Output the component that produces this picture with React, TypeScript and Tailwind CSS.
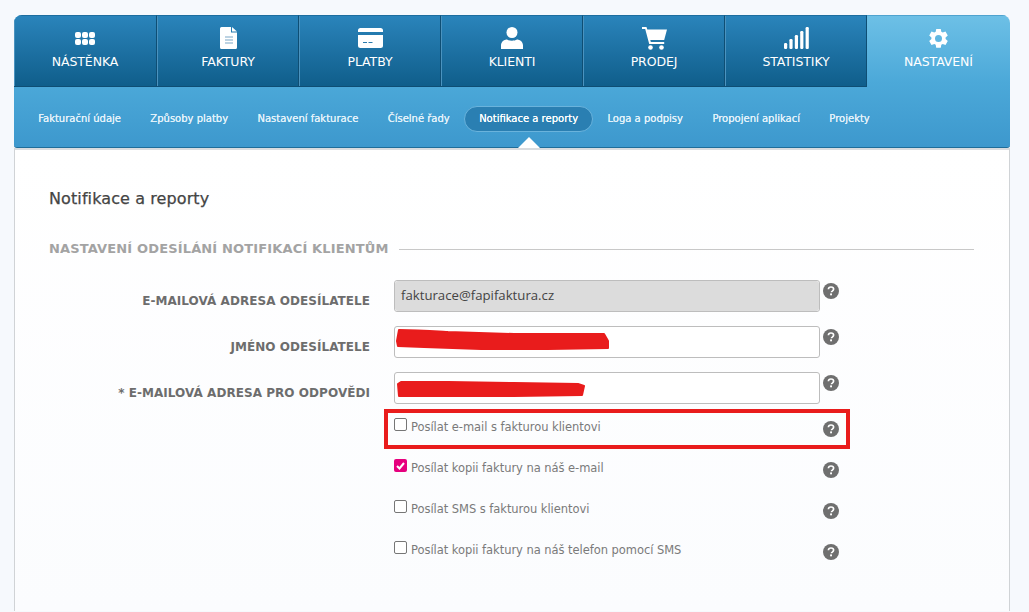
import React from "react";

function Help() {
  return (
    <svg width="16" height="16" viewBox="0 0 16 16" className="block shrink-0">
      <circle cx="8" cy="8" r="8" fill="#6f6f6f" />
      <path d="M5.4 6.2C5.5 4.7 6.6 4 8 4c1.5 0 2.6.8 2.6 2.1 0 1-.6 1.5-1.3 2-.6.4-.8.6-.8 1.2" fill="none" stroke="#fff" strokeWidth="1.7" />
      <rect x="7.1" y="10.4" width="1.9" height="1.9" fill="#fff" />
    </svg>
  );
}

const icons: Record<string, React.ReactNode> = {
  grid: (
    <svg width="20" height="13" viewBox="0 0 20 13" fill="#fff">
      {[0, 7, 14].map((x) => (
        <g key={x}>
          <rect x={x} y="0" width="6" height="6" rx="2" />
          <rect x={x} y="7" width="6" height="6" rx="2" />
        </g>
      ))}
    </svg>
  ),
  doc: (
    <svg width="17" height="22" viewBox="0 0 17 22">
      <path d="M1.5 0H11v5.5h6V20.5a1.5 1.5 0 0 1-1.5 1.5h-14A1.5 1.5 0 0 1 0 20.500V1.500A1.500 1.500 0 0 1 1.500 0Z" fill="#fff" />
      <path d="M12 0l5 4.500h-5Z" fill="#fff" />
      <path d="M5 10h8M5 13h8M5 16h8" stroke="#7aa7c7" strokeWidth="1" />
    </svg>
  ),
  card: (
    <svg width="25" height="20" viewBox="0 0 25 20" fill="#fff">
      <path d="M2.500 0h20A2.500 2.500 0 0 1 25 2.500V4H0V2.500A2.500 2.500 0 0 1 2.500 0Z" />
      <path d="M0 7h25v10.500a2.500 2.500 0 0 1-2.500 2.500h-20A2.500 2.500 0 0 1 0 17.500Z" />
      <rect x="5" y="14" width="4" height="1" fill="#2a7aac" />
      <rect x="10.500" y="14" width="4" height="1" fill="#2a7aac" />
    </svg>
  ),
  user: (
    <svg width="22" height="22" viewBox="0 0 22 22" fill="#fff">
      <circle cx="11" cy="5.500" r="5.500" />
      <path d="M0 22v-3.500C0 14.500 3.500 12.500 6 12.500c1.500.8 3 1.200 5 1.200s3.500-.4 5-1.200c2.500 0 6 2 6 6V22Z" />
    </svg>
  ),
  cart: (
    <svg width="25" height="23" viewBox="0 0 25 23" fill="#fff">
      <path d="M0 0h4.500l.8 2.500H25l-2.800 10.500H8.300l.5 2h13.400v2H7.200L3.200 2H0Z" />
      <circle cx="8.500" cy="20.500" r="2.300" />
      <circle cx="19.500" cy="20.500" r="2.300" />
    </svg>
  ),
  bars: (
    <svg width="25" height="22" viewBox="0 0 25 22" fill="#fff">
      <rect x="0" y="16" width="3.200" height="6" rx="1.200" />
      <rect x="5.400" y="12" width="3.200" height="10" rx="1.200" />
      <rect x="10.800" y="8" width="3.200" height="14" rx="1.200" />
      <rect x="16.200" y="4" width="3.200" height="18" rx="1.200" />
      <rect x="21.600" y="0" width="3.200" height="22" rx="1.200" />
    </svg>
  ),
  gear: (
    <svg width="21" height="21" viewBox="0 0 24 24" fill="#fff">
      <path fillRule="evenodd" d="M14.600 0l.6 3.300 1.600.9 3.200-1.100 2.600 4.500-2.500 2.200v1.900l2.500 2.200-2.600 4.500-3.200-1.100-1.600.9-.6 3.300H9.400l-.6-3.300-1.600-.9-3.200 1.100L1.400 13.900l2.500-2.200v-1.900L1.400 7.600 4 3.100l3.200 1.100 1.600-.9L9.400 0ZM12 7a4 4 0 1 0 0 8 4 4 0 0 0 0-8Z" transform="translate(0 1)" />
    </svg>
  ),
};

const tabs = [
  { label: "NÁSTĚNKA", icon: "grid" },
  { label: "FAKTURY", icon: "doc" },
  { label: "PLATBY", icon: "card" },
  { label: "KLIENTI", icon: "user" },
  { label: "PRODEJ", icon: "cart" },
  { label: "STATISTIKY", icon: "bars" },
];

const subs = [
  "Fakturační údaje",
  "Způsoby platby",
  "Nastavení fakturace",
  "Číselné řady",
  "Notifikace a reporty",
  "Loga a podpisy",
  "Propojení aplikací",
  "Projekty",
];

function Field({ label, children }: { label: string; children: React.ReactNode }) {
  return (
    <div className="flex items-start">
      <div className="w-[321px] pt-[12px] text-right text-[12px] leading-[18px] font-bold tracking-[0.05px] text-[#6d6d6d]">
        {label}
      </div>
      <div className="ml-[24px] flex h-[32px] w-[426px] items-center rounded-[3px] border border-[#bdbdbd] bg-white">
        {children}
      </div>
      <div className="ml-[3px] pt-[3px]">
        <Help />
      </div>
    </div>
  );
}

function Check({ label, checked }: { label: string; checked?: boolean }) {
  return (
    <div className="ml-[345px] flex h-[41px] w-[445px] items-start">
      {checked ? (
        <span className="flex h-[13px] w-[13px] items-center justify-center rounded-[2px] bg-[#e6007e]">
          <svg width="9" height="8" viewBox="0 0 9 8"><path d="M1 4l2.500 2.500L8 1" fill="none" stroke="#fff" strokeWidth="2" /></svg>
        </span>
      ) : (
        <span className="h-[13px] w-[13px] rounded-[2px] border border-[#767676] bg-white" />
      )}
      <span className="ml-[4px] text-[11.5px] leading-[18px] tracking-[-0.05px] text-[#7a7a7a]">{label}</span>
      <span className="mt-[3px] ml-auto"><Help /></span>
    </div>
  );
}

export default function App() {
  return (
    <div className="min-h-[612px] overflow-hidden bg-[#f6f9fd] px-[14px] pt-[15px] [font-family:'DejaVu_Sans',sans-serif]">
      <div className="w-[996px]">
        <div className="overflow-hidden rounded-t-[8px] rounded-b-[3px] border-b border-[#1f6d99] bg-gradient-to-b from-[#6dc0e6] via-[#4ca9d9] to-[#3d98cd]">
          <div className="flex h-[72px]">
            {tabs.map((t) => (
              <div
                key={t.label}
                className="flex w-[142px] flex-col items-center border-t border-r border-b border-t-[#1d6d9f] border-r-[#0e4e74] border-b-[#0e4e74] bg-gradient-to-b from-[#2a84bb] to-[#0f5e8b] pt-[11px] pl-[1px] shadow-[inset_1px_0_0_#4b93bf] first:w-[143px] first:pl-0"
              >
                <div className="flex h-[22px] items-center">{icons[t.icon]}</div>
                <div className="mt-[5px] text-[12.5px] leading-[16px] tracking-[-0.1px] text-white">{t.label}</div>
              </div>
            ))}
            <div className="flex flex-1 flex-col items-center border-t border-t-[#4fa3cf] pt-[11px]">
              <div className="flex h-[22px] items-center">{icons.gear}</div>
              <div className="mt-[5px] text-[12.5px] leading-[16px] tracking-[-0.1px] text-white">NASTAVENÍ</div>
            </div>
          </div>
          <div className="flex h-[60px] items-center pt-[4px] pl-[9.500px]">
            {subs.map((s) => {
              const active = s === "Notifikace a reporty";
              return (
                <div
                  key={s}
                  className={
                    "rounded-full border px-[13.7px] py-[4px] text-[10px] leading-[16px] [text-shadow:0_0_0.6px_#fff] " +
                    (active ? "border-[#6ab3dc] bg-[#2a7fb2] text-white" : "border-transparent text-[#e0f1fa]")
                  }
                >
                  {s}
                </div>
              );
            })}
          </div>
        </div>

        <div className="relative h-[463px] border-x border-t-2 border-x-[#d0d3d6] border-t-[#d9dcdf] bg-gradient-to-b from-white to-[#fbfcfe] pr-[35px] pl-[34px]">
          <div className="absolute -top-[13px] left-[503px] h-0 w-0 border-x-[11px] border-b-[11px] border-x-transparent border-b-white" />
          <h1 className="pt-[38px] text-[16px] leading-[22px] font-normal tracking-[0.1px] text-[#444] [-webkit-text-stroke:0.25px_#444]">
            Notifikace a reporty
          </h1>
          <div className="mt-[30px] flex items-center">
            <span className="text-[13px] leading-[18px] font-bold tracking-[0.15px] text-[#a3a3a3]">NASTAVENÍ ODESÍLÁNÍ NOTIFIKACÍ KLIENTŮM</span>
            <span className="ml-[10px] h-px flex-1 bg-[#c8c8c8]" />
          </div>
          <div className="mt-[22px] flex flex-col gap-[14px]">
            <Field label="E-MAILOVÁ ADRESA ODESÍLATELE">
              <div className="flex h-full w-full items-center rounded-[3px] bg-[#dcdcdc] pl-[6px] text-[13.2px] text-[#444] [font-family:'Open_Sans',sans-serif]">
                fakturace@fapifaktura.cz
              </div>
            </Field>
            <Field label="JMÉNO ODESÍLATELE"><span /></Field>
            <Field label="* E-MAILOVÁ ADRESA PRO ODPOVĚDI"><span /></Field>
          </div>
          <div className="mt-[14px]">
            <Check label="Posílat e-mail s fakturou klientovi" />
            <Check label="Posílat kopii faktury na náš e-mail" checked />
            <Check label="Posílat SMS s fakturou klientovi" />
            <Check label="Posílat kopii faktury na náš telefon pomocí SMS" />
          </div>

          {/* red annotations drawn over the form */}
          <svg className="absolute top-[178px] left-[380px]" width="214" height="23" viewBox="-1 -1 214 23">
            <path d="M1 12L3 1C20 1 35 2 52 3L118 5L208 5L212 12L212 19L152 20L85 20L28 18L2 17Z" fill="#e91c1c" stroke="#e91c1c" strokeWidth="2" strokeLinejoin="round" />
          </svg>
          <svg className="absolute top-[230px] left-[382px]" width="189" height="17" viewBox="-1 -1 189 17">
            <path d="M0 3L3 1L50 1L116 2L180 3L186 5L184 14L116 15L50 15L1 15Z" fill="#e91c1c" stroke="#e91c1c" strokeWidth="2" strokeLinejoin="round" />
          </svg>
          <div className="absolute top-[259px] left-[369px] h-[40px] w-[466px] border-[4px] border-[#e91c1c]" />
        </div>
      </div>
    </div>
  );
}
